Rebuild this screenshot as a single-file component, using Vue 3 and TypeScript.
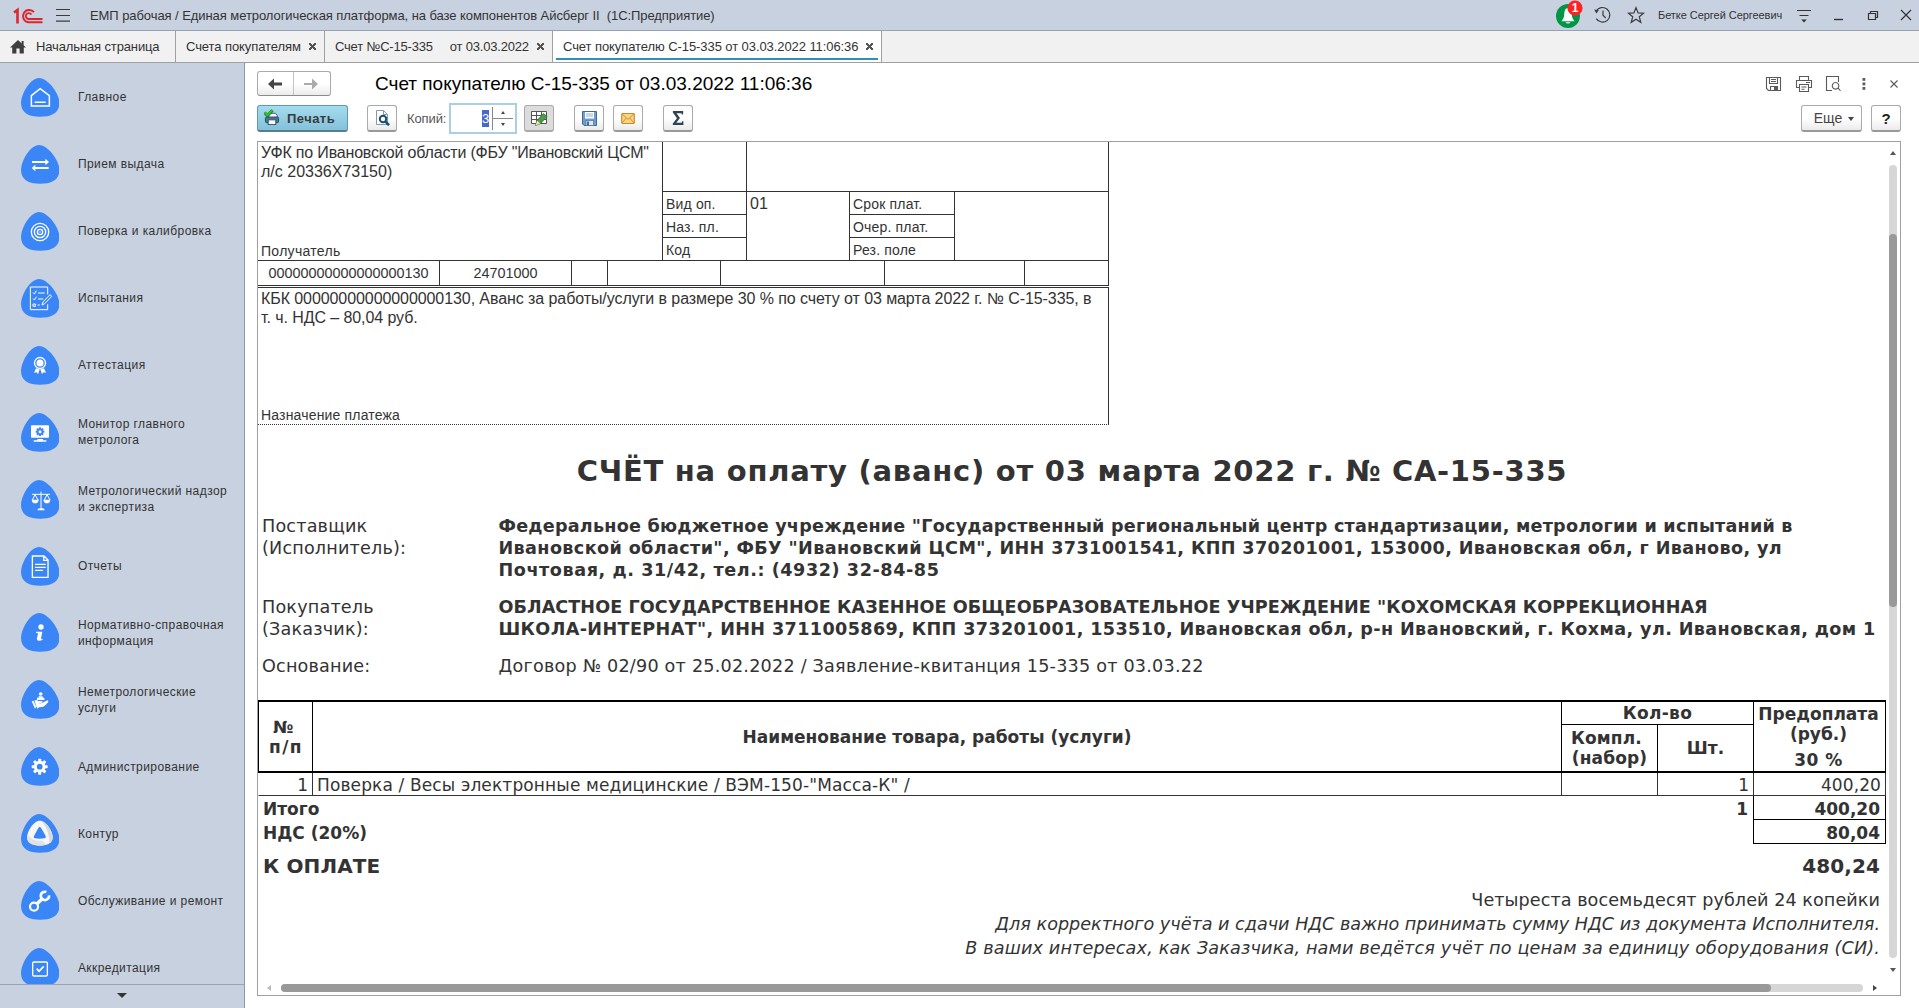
<script setup lang="ts">
interface Section { icon: string; lines: string[] }

const sections: Section[] = [
  { icon: 'home', lines: ['Главное'] },
  { icon: 'exchange', lines: ['Прием выдача'] },
  { icon: 'target', lines: ['Поверка и калибровка'] },
  { icon: 'checklist', lines: ['Испытания'] },
  { icon: 'medal', lines: ['Аттестация'] },
  { icon: 'monitor', lines: ['Монитор главного', 'метролога'] },
  { icon: 'scales', lines: ['Метрологический надзор', 'и экспертиза'] },
  { icon: 'report', lines: ['Отчеты'] },
  { icon: 'info', lines: ['Нормативно-справочная', 'информация'] },
  { icon: 'hand', lines: ['Неметрологические', 'услуги'] },
  { icon: 'gear', lines: ['Администрирование'] },
  { icon: 'kontur', lines: ['Контур'] },
  { icon: 'wrench', lines: ['Обслуживание и ремонт'] },
  { icon: 'checkbox', lines: ['Аккредитация'] },
]
const teeth = [0, 45, 90, 135, 180, 225, 270, 315]
</script>

<template>
  <div class="app">
    <header class="titlebar">
      <svg class="logo" width="30" height="20" viewBox="0 0 30 20" fill="none" stroke="#e0242c">
        <path d="M1 6.5L4.5 4V17.5" stroke-width="2.6" />
        <path d="M21 6.2A6.2 6.2 0 1 0 15.3 16.3H29.5" stroke-width="2" />
        <path d="M18.4 8.6A3 3 0 1 0 15.3 13H29.5" stroke-width="1.8" />
      </svg>
      <svg class="burger" width="15" height="14" viewBox="0 0 15 14" stroke="#3b3b3b" stroke-width="1.2">
        <path d="M0 1.5H14M0 7.5H14M0 13.2H14" />
      </svg>
      <span class="apptitle">ЕМП рабочая / Единая метрологическая платформа, на базе компонентов Айсберг II&nbsp; (1С:Предприятие)</span>
      <span class="grow"></span>
      <svg class="bell" width="28" height="30" viewBox="0 0 28 30">
        <circle cx="13" cy="16" r="12" fill="#009646" />
        <path d="M13 8C9.6 8.2 9.4 12 9.2 15C9 18 7.8 19.4 6.4 21.3H19.6C18.2 19.4 17 18 16.8 15C16.6 12 16.4 8.2 13 8Z" fill="#fff" />
        <path d="M10.3 22.3H15.7Q13 24.9 10.3 22.3Z" fill="#fff" />
        <circle cx="20" cy="8" r="7.6" fill="#ff2222" />
        <text x="20" y="12.2" text-anchor="middle" font-size="12" font-weight="bold" fill="#fff">1</text>
      </svg>
      <svg class="hist" width="18" height="18" viewBox="0 0 18 18" fill="none" stroke="#3b3b3b" stroke-width="1.2">
        <path d="M2.2 5.2A7.3 7.3 0 1 1 2.3 12.6M9 4.6V9.2L11.8 12.2" />
        <path d="M0.2 3.6L4.8 4.2L2.4 7.6Z" fill="#3b3b3b" stroke="none" />
      </svg>
      <svg class="star" width="18" height="18" viewBox="0 0 18 18" fill="none" stroke="#3b3b3b" stroke-width="1.2">
        <path d="M9 1.6L11.1 6.9L16.6 7.2L12.3 10.8L13.8 16.3L9 13.2L4.2 16.3L5.7 10.8L1.4 7.2L6.9 6.9Z" />
      </svg>
      <span class="user">Бетке Сергей Сергеевич</span>
      <svg class="win" width="120" height="20" viewBox="0 0 120 20" fill="none" stroke="#333" stroke-width="1.2">
        <path d="M1 5.5H15M3.5 10.5H12.5" />
        <path d="M5.2 14.5H10.8L8 17.6Z" fill="#333" stroke="none" />
        <path d="M38 14.5H47" stroke-width="1.4" />
        <path d="M72.5 8.5H79.5V14.5H72.5ZM74.5 8V6.5H81.5V12.5H80" />
        <path d="M105 5L115 15M115 5L105 15" />
      </svg>
    </header>

    <nav class="tabs">
      <div class="tab t1">
        <svg width="16" height="14" viewBox="0 0 16 14"><path d="M8 0L16 7.4H13.8V13.5H9.6V8.6H6.4V13.5H2.2V7.4H0Z" fill="#3f3f3f" /><path d="M11.6 1H13.6V5H11.6Z" fill="#3f3f3f" /></svg>
        <span>Начальная страница</span>
      </div>
      <div class="tab t2"><span>Счета покупателям</span><i class="x"></i></div>
      <div class="tab t3"><span>Счет №С-15-335&nbsp;&nbsp;&nbsp; &nbsp;от 03.03.2022</span><i class="x"></i></div>
      <div class="tab t4"><span>Счет покупателю С-15-335 от 03.03.2022 11:06:36</span><i class="x"></i></div>
    </nav>

    <div class="body">
      <aside class="side">
        <div class="sections">
          <div v-for="s in sections" :key="s.icon" class="section">
            <svg class="sicon" width="38.4" height="39" viewBox="0 0 115 117" fill="none" stroke="#fff" stroke-width="4">
              <path d="M54 0C80 0 115 46 115 75C115 104 92 116 57 116C22 116 0 104 0 75C0 46 29 0 54 0Z" fill="#3b86f7" stroke="none" />
              <path v-if="s.icon === 'home'" d="M31 53L57.500 32L85 53V84H31ZM41 73H74" stroke-width="4.500" />
              <g v-else-if="s.icon === 'exchange'">
                <path d="M33 51H76M40 69H83" stroke-width="5.500" />
                <path d="M73 41L84 51L73 61ZM43 59L32 69L43 79Z" fill="#fff" stroke="none" />
              </g>
              <g v-else-if="s.icon === 'target'">
                <circle cx="57" cy="60" r="26" /><circle cx="57" cy="60" r="17" /><circle cx="57" cy="60" r="8" /><circle cx="57" cy="60" r="2" fill="#fff" stroke="none" />
              </g>
              <g v-else-if="s.icon === 'checklist'" stroke-width="3">
                <path d="M80 46V24H28V92H80V76" />
                <path d="M36 41L40 45L46 35M51 42H71M36 59L40 63L46 53M51 60H67M36 75H43V82H36ZM50 78H56" />
                <path d="M63 78L66 69L87 47L92 52L71 74Z" />
              </g>
              <g v-else-if="s.icon === 'medal'">
                <circle cx="57" cy="51" r="16.500" /><circle cx="57" cy="51" r="10.500" fill="#fff" stroke="none" />
                <path d="M45 67L39 80L47 79L51 85L56 70ZM69 67L75 80L67 79L63 85L58 70Z" fill="#fff" stroke="none" />
              </g>
              <g v-else-if="s.icon === 'monitor'" stroke="none">
                <rect x="30" y="37" width="54" height="37" rx="2" fill="#fff" />
                <path d="M49 78H66V82H76V86H38V82H49Z" fill="#fff" />
                <g fill="#3b86f7"><rect v-for="a in teeth" :key="a" x="54" y="43" width="6" height="8" :transform="`rotate(${a} 57 56)`" /></g>
                <circle cx="57" cy="56" r="7" fill="#fff" stroke="#3b86f7" stroke-width="5" />
              </g>
              <g v-else-if="s.icon === 'scales'" stroke-width="3">
                <path d="M60 35V88M33 43H87M42 44L34 60M42 44L51 60M78 44L70 60M78 44L87 60" />
                <path d="M32 59H53Q52 70 42 70Q33 70 32 59ZM67 59H88Q87 70 78 70Q68 70 67 59ZM49 91Q49 85 57 85H64Q71 85 71 91Z" fill="#fff" stroke="none" />
              </g>
              <path v-else-if="s.icon === 'report'" d="M34 27H69L81 39V91H34ZM68 27V40H81M42 52H74M42 61H74M42 70H66" />
              <g v-else-if="s.icon === 'info'" fill="#fff" stroke="none">
                <circle cx="60" cy="42" r="8" />
                <path d="M46 56H64L60 76Q60 79 65 77L64 81Q58 84 53 83Q46 82 48 74L51 62Q50 59 45 60Z" />
              </g>
              <g v-else-if="s.icon === 'hand'" fill="#fff" stroke="none">
                <circle cx="59" cy="42" r="5.500" />
                <path d="M53 49H65V53H70V60H48V53H53Z" />
                <path d="M32 64L37 62L46 80L42 86ZM40 62Q46 58 52 63L65 64Q66 68 61 69L53 70Q62 72 70 65L80 61Q84 63 80 68Q71 79 64 81L54 82L49 86Z" />
              </g>
              <g v-else-if="s.icon === 'gear'">
                <g fill="#fff" stroke="none"><rect v-for="a in teeth" :key="a" x="51.500" y="35" width="9" height="12" rx="2" :transform="`rotate(${a} 56 59)`" /></g>
                <circle cx="56" cy="59" r="13" stroke-width="9" />
              </g>
              <g v-else-if="s.icon === 'kontur'" stroke="none">
                <path d="M56 20C75 20 95 52 95 70C95 87 80 95 56 95C33 95 18 87 18 70C18 52 38 20 56 20Z" fill="#f7f7f7" />
                <path d="M62 21C79 27 95 53 95 70C95 78 91 84 85 88C86 66 78 40 62 21Z" fill="#d9d9d9" />
                <path d="M20 62C28 75 45 82 64 80L76 92C50 99 18 91 18 70Z" fill="#e2e2e2" />
                <path d="M56 38Q59 38 74 66Q76 72 71 73Q56 75 41 73Q36 72 39 66Q53 38 56 38Z" fill="#3b86f7" />
              </g>
              <g v-else-if="s.icon === 'wrench'">
                <circle cx="39" cy="77" r="12" stroke-width="6.500" />
                <path d="M48 68L66 51" stroke-width="10" />
                <path d="M76 33A12.500 12.500 0 1 0 84 43" stroke-width="8" />
              </g>
              <g v-else>
                <rect x="35" y="42" width="44" height="42" rx="4" /><path d="M47 62L54 70L68 55" stroke-width="5" />
              </g>
            </svg>
            <div class="slabel"><div v-for="l in s.lines" :key="l">{{ l }}</div></div>
          </div>
        </div>
        <div class="more"><i class="down"></i></div>
      </aside>

      <main class="main">
        <div class="headrow">
          <div class="navbtns">
            <span><svg width="14" height="12" viewBox="0 0 14 12"><path d="M0 6L6 0.500V4.600H14V7.400H6V11.500Z" fill="#444" /></svg></span>
            <span><svg width="14" height="12" viewBox="0 0 14 12"><path d="M14 6L8 0.500V4.900H0V7.100H8V11.500Z" fill="#aaa" /></svg></span>
          </div>
          <h1>Счет покупателю С-15-335 от 03.03.2022 11:06:36</h1>
          <span class="grow"></span>
          <svg class="winacts" width="140" height="18" viewBox="0 0 140 18" fill="none" stroke="#5a5a5a" stroke-width="1.100">
            <path d="M1.500 2.500H15.500V15.500H3.500L1.500 13.500ZM4.500 2.500V8.500H12.500V2.500M6 4.500H11M6 6.500H11M5.500 15.500V11.500H12.500V15.500" />
            <path d="M9 12H12V15H9Z" fill="#5a5a5a" stroke="none" />
            <path d="M34.500 5.500V1.500H43.500V5.500M34 12.500H31.500V5.500H46.500V12.500H44M34.500 9.500H43.500V16.500H34.500ZM36.500 12H41.500M36.500 14.200H39.500M41 7.500H45" />
            <path d="M67 15.500H61.500V1.500H73.500V7M70.500 7.500A3.300 3.300 0 1 0 70.600 7.500M72.800 12.500L75.500 16" />
            <g fill="#5a5a5a" stroke="none"><rect x="97.500" y="3" width="2.800" height="2.800" /><rect x="97.500" y="7.500" width="2.800" height="2.800" /><rect x="97.500" y="12" width="2.800" height="2.800" /></g>
            <path d="M125.500 5.500L132.500 12.500M132.500 5.500L125.500 12.500" />
          </svg>
        </div>

        <div class="tools">
          <div class="btn print">
            <svg width="16" height="17" viewBox="0 0 17 17">
              <path d="M5 4H12L14 6V9H5Z" fill="#fff" stroke="#31536a" />
              <rect x="1.500" y="8" width="14" height="6" rx="1.500" fill="#4c7594" stroke="#23485f" />
              <rect x="4.500" y="11" width="8" height="5" fill="#fff" stroke="#31536a" />
              <path d="M0.500 3.200L3.600 6.500L9 0.800" fill="none" stroke="#1f7a1f" stroke-width="3.400" />
              <path d="M0.800 3.200L3.600 6L8.600 1" fill="none" stroke="#35c435" stroke-width="2" />
            </svg>
            <span>Печать</span>
          </div>
          <div class="btn b30 m19">
            <svg width="16" height="16" viewBox="0 0 16 16" fill="none"><path d="M2.500 0.500H9.500L13.500 4.500V14.500H2.500Z" fill="#fff" stroke="#8a9aa5" /><path d="M9.500 0.500V4.500H13.500" stroke="#8a9aa5" /><circle cx="9" cy="9" r="3.200" stroke="#164f77" stroke-width="2" /><path d="M11.300 11.300L15 15.200" stroke="#164f77" stroke-width="2.500" /></svg>
          </div>
          <span class="copies">Копий:</span>
          <div class="spin">
            <span class="sel">3</span>
            <span class="updown"><i class="su"></i><i class="sd"></i></span>
          </div>
          <div class="btn b30 on m7">
            <svg width="18" height="17" viewBox="0 0 18 17" fill="none"><path d="M1.500 1.500H16.500V13.500H1.500Z" fill="#fff" stroke="#555" /><path d="M1.500 5.500H16.500M1.500 9.500H16.500M6.500 1.500V13.500M11.500 1.500V13.500" stroke="#555" /><path d="M5.500 15.500L7 10.500L13.500 3.500L17 6.500L10.500 13.500Z" fill="#4a9e4a" stroke="#2d6e2d" stroke-width=".8" /><path d="M5.500 15.500L7 10.500L10.500 13.500Z" fill="#f0d8a8" /></svg>
          </div>
          <div class="btn b30 m20">
            <svg width="15" height="15" viewBox="0 0 15 15"><path d="M0.500 0.500H14.500V14.500H2L0.500 13Z" fill="#6c9dcb" stroke="#3f6b96" /><rect x="3" y="1" width="9" height="6.500" fill="#fff" /><path d="M4 3H11M4 5H11" stroke="#8fb0cf" /><rect x="4" y="9.500" width="7.500" height="5" fill="#dfe8f0" stroke="#3f6b96" stroke-width=".6" /><rect x="5" y="10.500" width="2" height="4" fill="#3f6b96" /></svg>
          </div>
          <div class="btn b30 m9">
            <svg width="14" height="11" viewBox="0 0 15 12" fill="none"><rect x=".6" y=".6" width="13.800" height="10.800" rx="1" fill="#fbd483" stroke="#c98a2c" stroke-width="1.200" /><path d="M1 1L7.500 7L14 1M1 11L5.500 5.500M14 11L9.500 5.500" stroke="#c98a2c" /></svg>
          </div>
          <div class="btn b30 m20">
            <svg width="12" height="14" viewBox="0 0 14 14" preserveAspectRatio="none"><path d="M1 0H13V3.600H11.600L11 2.200H5.200L9.300 7L5 11.700H11.300L12 10.200H13.300V14H1V12.600L5.800 7.200L1 1.600Z" fill="#2d4356" /></svg>
          </div>
          <span class="grow"></span>
          <div class="btn esche"><span>Еще</span><i class="sm"></i></div>
          <div class="btn b30 m9 q">?</div>
        </div>

        <div class="doc">
          <div class="view">
            <div class="sheet">
              <div class="form">
                <div class="payee"><div class="big"><span class="ufk">УФК по Ивановской области (ФБУ "Ивановский ЦСМ"</span><br>л/с 20336Х73150)</div><div class="cap">Получатель</div></div>
                <div class="c bl"></div>
                <div class="c bl br span3"></div>
                <div class="c bl bt k1">Вид оп.</div>
                <div class="c bl bt tall a3"><span class="big">01</span></div>
                <div class="c bl bt k2">Срок плат.</div>
                <div class="c bl bt br tall a5"></div>
                <div class="c bl bt k1">Наз. пл.</div>
                <div class="c bl bt k2">Очер. плат.</div>
                <div class="c bl bt k1">Код</div>
                <div class="c bl bt k2">Рез. поле</div>
              </div>
              <div class="codes">
                <div>00000000000000000130</div><div>24701000</div><div></div><div></div><div></div><div></div><div></div>
              </div>
              <div class="purpose">
                <div class="big kbk">КБК 00000000000000000130, Аванс за работы/услуги в размере 30 % по счету от 03 марта 2022 г. № С-15-335, в<br>т. ч. НДС – 80,04 руб.</div>
                <div class="cap np">Назначение платежа</div>
              </div>
              <h2>СЧЁТ на оплату (аванс) от 03 марта 2022 г. № СА-15-335</h2>
              <div class="party p1">
                <div>Поставщик<br>(Исполнитель):</div>
                <b><span class="s23">Федеральное бюджетное учреждение "Государственный региональный центр стандартизации, метрологии и испытаний в</span><br><span class="s38">Ивановской области", ФБУ "Ивановский ЦСМ", ИНН 3731001541, КПП 370201001, 153000, Ивановская обл, г Иваново, ул</span><br><span class="s58">Почтовая, д. 31/42, тел.: (4932) 32-84-85</span></b>
              </div>
              <div class="party p2">
                <div>Покупатель<br>(Заказчик):</div>
                <b><span class="s06">ОБЛАСТНОЕ ГОСУДАРСТВЕННОЕ КАЗЕННОЕ ОБЩЕОБРАЗОВАТЕЛЬНОЕ УЧРЕЖДЕНИЕ "КОХОМСКАЯ КОРРЕКЦИОННАЯ</span><br><span class="s38">ШКОЛА-ИНТЕРНАТ", ИНН 3711005869, КПП 373201001, 153510, Ивановская обл, р-н Ивановский, г. Кохма, ул. Ивановская, дом 1</span></b>
              </div>
              <div class="party p3">
                <div>Основание:</div>
                <span class="s23">Договор № 02/90 от 25.02.2022 / Заявление-квитанция 15-335 от 03.03.22</span>
              </div>
              <div class="goods">
                <div class="h h-n"><span>№</span><span class="pp">п/п</span></div>
                <div class="h h-name">Наименование товара, работы (услуги)</div>
                <div class="h h-qty">Кол-во</div>
                <div class="h h-sum"><span>Предоплата<br>(руб.)</span><span class="pct">30 %</span></div>
                <div class="h h-set">Компл.&nbsp;<br>(набор)</div>
                <div class="h h-pc">Шт.</div>
                <div class="r first">1</div><div class="r l">Поверка / Весы электронные медицинские / ВЭМ-150-"Масса-К" /</div><div class="r"></div><div class="r">1</div><div class="r last">400,20</div>
                <div class="tt">Итого</div><div class="tq">1</div><div class="ts">400,20</div>
                <div class="tt">НДС (20%)</div><div class="tq"></div><div class="ts">80,04</div>
              </div>
              <div class="pay"><span>К ОПЛАТЕ</span><span>480,24</span></div>
              <div class="note w">Четыреста восемьдесят рублей 24 копейки</div>
              <div class="note i1">Для корректного учёта и сдачи НДС важно принимать сумму НДС из документа Исполнителя.</div>
              <div class="note i2">В ваших интересах, как Заказчика, нами ведётся учёт по ценам за единицу оборудования (СИ).</div>
            </div>
            <div class="vbar"><i class="vu"></i><div class="vtrack"><div class="vthumb"></div></div><i class="vd"></i></div>
          </div>
          <div class="hbar"><i class="hl"></i><div class="htrack"><div class="hthumb"></div></div><i class="hr"></i></div>
        </div>
      </main>
    </div>
  </div>
</template>

<style>
body { margin: 0; background: #fff; overflow: hidden; }
</style>

<style scoped>
* { box-sizing: border-box; }
.app { width: 1919px; height: 1008px; display: flex; flex-direction: column; overflow: hidden; font-family: "Liberation Sans", Arial, sans-serif; font-size: 12px; color: #333; background: #fff; white-space: nowrap; }
.grow { flex: 1; }
svg { flex: none; display: block; }
i { flex: none; }

.titlebar { height: 31px; flex: none; background: #c8d1e0; border-bottom: 1px solid #95a2b5; display: flex; align-items: center; padding-left: 13px; }
.logo { margin-top: 1px; }
.burger { margin-left: 13px; }
.apptitle { margin-left: 19px; font-size: 13px; letter-spacing: -0.07px; }
.bell { align-self: flex-start; }
.hist { margin-left: 11px; }
.star { margin-left: 15px; }
.user { margin-left: 13px; font-size: 11px; width: 127px; letter-spacing: -0.05px; }
.win { margin-left: 11px; margin-right: 3px; }

.tabs { height: 32px; flex: none; background: #f1f1f1; border-bottom: 1px solid #a0a0a0; display: flex; font-size: 13px; }
.tab { display: flex; align-items: center; border-right: 1px solid #a0a0a0; padding-left: 10px; position: relative; height: 31px; letter-spacing: -0.08px; }
.tab .x { margin-left: auto; margin-right: 8px; }
.t1 { width: 176px; letter-spacing: -0.13px; }
.t1 span { margin-left: 10px; }
.t2 { width: 149px; }
.t3 { width: 228px; letter-spacing: -0.2px; }
.t4 { width: 329px; background: #fff; }
.t4::after { content: ""; position: absolute; left: 3px; right: 3px; bottom: 2px; height: 2px; background: #2b91b8; }
.x { width: 7px; height: 7px; background: linear-gradient(45deg, transparent 41%, #555 41%, #555 59%, transparent 59%), linear-gradient(-45deg, transparent 41%, #555 41%, #555 59%, transparent 59%); }

.body { flex: 1; display: flex; min-height: 0; }
.side { width: 245px; flex: none; background: #c8d1e0; border-right: 1px solid #8997ac; display: flex; flex-direction: column; }
.sections { height: 921px; overflow: hidden; padding-top: 1px; }
.section { height: 66.95px; display: flex; align-items: center; padding-left: 21px; }
.slabel { margin-left: 18.5px; font-size: 12px; line-height: 16px; letter-spacing: 0.43px; }
.more { flex: 1; border-top: 1px solid #98a4b6; display: flex; justify-content: center; padding-top: 8px; }
.down { width: 0; height: 0; border: 5px solid transparent; border-top: 5px solid #333; }

.main { flex: 1; padding: 8px 18px 0 12px; display: flex; flex-direction: column; min-width: 0; }
.headrow { display: flex; align-items: center; height: 25px; flex: none; }
.navbtns { display: flex; width: 74px; height: 25px; border: 1px solid #aaa; border-bottom-color: #8c8c8c; border-radius: 3px; background: linear-gradient(#fff 50%, #ececec); }
.navbtns span { flex: 1; display: flex; align-items: center; justify-content: center; }
.navbtns span:first-child { padding-right: 1px; }
.navbtns span + span { border-left: 1px solid #c4c4c4; padding-right: 2px; }
h1 { margin: 0 0 0 44px; font-size: 19px; font-weight: normal; color: #000; }
.winacts { margin-right: -4px; }

.tools { display: flex; align-items: center; height: 31px; margin-top: 7px; flex: none; }
.btn { height: 27px; border: 1px solid #aaa; border-bottom: 2px solid #999; border-radius: 3px; background: linear-gradient(#fff 50%, #ebebeb); display: flex; align-items: center; justify-content: center; }
.b30 { width: 30px; }
.m19 { margin-left: 19px; }
.m7 { margin-left: 7px; }
.m9 { margin-left: 9px; }
.m20 { margin-left: 20px; }
.print { width: 91px; background: linear-gradient(#a5dbee, #84c1d9); border-color: #5e9bb2; border-bottom-color: #547f90; font-weight: bold; font-size: 13px; color: #3a3a3a; gap: 7px; letter-spacing: 0.45px; justify-content: flex-start; padding-left: 6px; }
.print svg { margin-top: -2px; }
.copies { margin-left: 10px; width: 42px; font-size: 13px; color: #555; letter-spacing: -0.1px; }
.spin { width: 68px; height: 31px; border: 2px solid #a9cfe0; background: #fff; display: flex; align-items: center; }
.sel { margin-left: 31px; width: 7px; height: 17px; background: #4a68c8; color: #fff; font-size: 13px; line-height: 18px; }
.updown { margin-left: 3px; width: 21px; height: 23px; border-left: 1px solid #888; display: flex; flex-direction: column; align-items: center; justify-content: space-between; padding: 4px 0; background: linear-gradient(#888, #888) 0 11px / 100% 1px no-repeat; }
.su { border: 2px solid transparent; border-top: 0; border-bottom: 3px solid #444; }
.sd { border: 2px solid transparent; border-bottom: 0; border-top: 3px solid #444; }
.on { background: #dcdcdc; border-color: #aaa; }
.esche { width: 61px; font-size: 14px; gap: 6px; padding-left: 5px; color: #444; }
.sm { border: 3px solid transparent; border-bottom: 0; border-top: 4px solid #444; margin-top: 2px; }
.q { font-size: 15px; font-weight: bold; color: #222; }

.doc { margin-top: 7px; width: 1644px; height: 855px; border: 1px solid #a0a0a0; display: flex; flex-direction: column; flex: none; }
.view { flex: none; height: 838px; display: flex; }
.sheet { width: 1628px; flex: none; }
.form { display: grid; grid-template-columns: 404px 84px 103px 105px 155px; grid-template-rows: 49px 23px 23px 23px; }
.payee { grid-row: 1 / 5; display: flex; flex-direction: column; justify-content: space-between; padding: 1px 0 0 3px; }
.big { font-size: 16px; line-height: 19px; }
.ufk { letter-spacing: -0.18px; }
.kbk { letter-spacing: -0.08px; }
.cap { font-size: 14px; line-height: 18px; letter-spacing: .3px; }
.np { letter-spacing: .17px; }
.bl { border-left: 1px solid #333; }
.br { border-right: 1px solid #333; }
.bt { border-top: 1px solid #333; }
.c { font-size: 14px; line-height: 24px; padding-left: 3px; letter-spacing: .17px; }
.c .big { line-height: 24px; letter-spacing: 0; }
.span3 { grid-column: 3 / 6; }
.tall { grid-row: 2 / 5; }
.k1 { grid-column: 2; }
.k2 { grid-column: 4; }
.a3 { grid-column: 3; }
.a5 { grid-column: 5; }
.codes { display: grid; grid-template-columns: 181px 132px 36px 113px 164px 140px 85px; height: 26px; width: 851px; border: solid #333; border-width: 1px 0; font-size: 14.4px; line-height: 25px; text-align: center; }
.codes div + div { border-left: 1px solid #333; }
.codes div:last-child { border-right: 1px solid #333; }
.purpose { margin-top: 1px; width: 851px; height: 138px; border-top: 1px solid #333; border-right: 1px solid #333; border-bottom: 1px dotted #333; padding: 1px 0 0 3px; display: flex; flex-direction: column; justify-content: space-between; }

h2, .party, .goods, .pay, .note { font-family: "DejaVu Sans", Verdana, sans-serif; }
h2 { margin: 16px 0 0; height: 60px; line-height: 60px; font-size: 29px; text-align: center; letter-spacing: 0.74px; }
.party { display: grid; grid-template-columns: 236.500px 1fr; padding-left: 4px; font-size: 17.6px; line-height: 22.2px; }
.party > div { letter-spacing: 0.18px; }
.s06 { letter-spacing: 0.06px; }
.s23 { letter-spacing: 0.22px; }
.s38 { letter-spacing: 0.375px; }
.s58 { letter-spacing: 0.57px; }
.p1 { margin-top: 14px; height: 81px; }
.p2 { height: 59px; }
.p3 { height: 45px; }
.goods { display: grid; grid-template-columns: 54px 1249px 96px 96px 133px; grid-template-rows: 24px 49px 23px 24px 24px; font-size: 17px; line-height: 20px; }
.h { font-weight: bold; border-left: 1px solid #000; display: flex; align-items: center; justify-content: center; text-align: center; }
.h-n { grid-area: 1 / 1 / 3 / 2; border-top: 2px solid #000; border-bottom: 2px solid #000; flex-direction: column; padding-right: 5px; }
.pp { letter-spacing: 1.5px; margin-right: -6px; }
.h-name { grid-area: 1 / 2 / 3 / 3; border-top: 2px solid #000; border-bottom: 2px solid #000; }
.h-qty { grid-area: 1 / 3 / 2 / 5; border-top: 2px solid #000; letter-spacing: .3px; }
.h-sum { grid-area: 1 / 5 / 3 / 6; border-top: 2px solid #000; border-bottom: 2px solid #000; border-right: 1px solid #000; flex-direction: column; padding-right: 2px; }
.pct { margin-top: 6px; letter-spacing: .5px; }
.h-set { grid-area: 2 / 3; border-top: 1px solid #000; border-bottom: 2px solid #000; letter-spacing: .15px; }
.h-pc { grid-area: 2 / 4; border-top: 1px solid #000; border-bottom: 2px solid #000; }
.r { border-left: 1px solid #333; border-bottom: 1px solid #333; text-align: right; padding: 2px 4px 0; }
.first { border-left-color: transparent; }
.l { text-align: left; letter-spacing: .13px; }
.last { border-right: 1px solid #333; letter-spacing: .1px; }
.tt { grid-column: 1 / 4; font-weight: bold; padding: 3px 0 0 5px; }
.tq { font-weight: bold; text-align: right; padding: 3px 5px 0 0; }
.ts { font-weight: bold; text-align: right; padding: 3px 5px 0 0; border: solid #000; border-width: 0 1px 1px; }
.pay { height: 44px; line-height: 45px; font-size: 20px; font-weight: bold; display: flex; justify-content: space-between; padding: 0 6px 0 5px; letter-spacing: .1px; }
.note { height: 24px; line-height: 24px; text-align: right; padding-right: 6px; font-size: 17.6px; }
.w { letter-spacing: .06px; }
.i1, .i2 { font-style: italic; }
.i2 { letter-spacing: .16px; }

.vbar { width: 14px; display: flex; flex-direction: column; align-items: center; }
.vu { margin-top: 9px; border: 3px solid transparent; border-top: 0; border-bottom: 4px solid #555; }
.vtrack { margin-top: 10px; width: 8px; height: 793px; border-radius: 4px; background: #d6d6d6; padding-top: 69px; }
.vthumb { height: 373px; background: #999; border-radius: 4px; }
.vd { margin-top: 10px; border: 3px solid transparent; border-bottom: 0; border-top: 4px solid #555; }
.hbar { display: flex; align-items: center; height: 15px; padding-left: 9px; margin-top: 0; }
.hl { border: 3px solid transparent; border-left: 0; border-right: 4px solid #bbb; }
.htrack { margin-left: 10px; width: 1582px; height: 8px; border-radius: 4px; background: #d6d6d6; }
.hthumb { width: 1490px; height: 8px; border-radius: 4px; background: #999; }
.hr { margin-left: 10px; border: 3px solid transparent; border-right: 0; border-left: 4px solid #444; }
</style>
